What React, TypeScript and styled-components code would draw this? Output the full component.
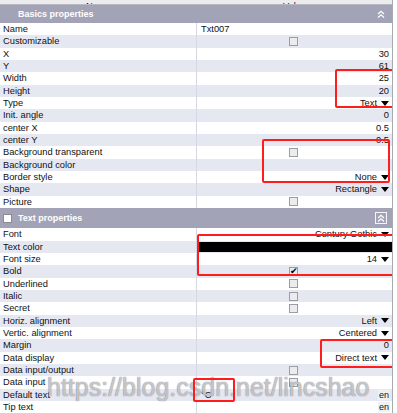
import React from "react";
import styled, { createGlobalStyle } from "styled-components";

const GlobalStyle = createGlobalStyle`
  html, body { margin: 0; padding: 0; background: #fff; }
  body { font-family: "Liberation Sans", Arial, sans-serif; color: #111; }
`;

type Value =
  | { kind: "left"; text: string }
  | { kind: "right"; text: string }
  | { kind: "check"; checked?: boolean }
  | { kind: "drop"; text: string }
  | { kind: "color"; color: string }
  | { kind: "lang"; text?: string }
  | { kind: "none" };

type Prop = { label: string; value: Value };

const basics: Prop[] = [
  { label: "Name", value: { kind: "left", text: "Txt007" } },
  { label: "Customizable", value: { kind: "check" } },
  { label: "X", value: { kind: "right", text: "30" } },
  { label: "Y", value: { kind: "right", text: "61" } },
  { label: "Width", value: { kind: "right", text: "25" } },
  { label: "Height", value: { kind: "right", text: "20" } },
  { label: "Type", value: { kind: "drop", text: "Text" } },
  { label: "Init. angle", value: { kind: "right", text: "0" } },
  { label: "center X", value: { kind: "right", text: "0.5" } },
  { label: "center Y", value: { kind: "right", text: "0.5" } },
  { label: "Background transparent", value: { kind: "check" } },
  { label: "Background color", value: { kind: "none" } },
  { label: "Border style", value: { kind: "drop", text: "None" } },
  { label: "Shape", value: { kind: "drop", text: "Rectangle" } },
  { label: "Picture", value: { kind: "check" } },
];

const textProps: Prop[] = [
  { label: "Font", value: { kind: "drop", text: "Century Gothic" } },
  { label: "Text color", value: { kind: "color", color: "#000" } },
  { label: "Font size", value: { kind: "drop", text: "14" } },
  { label: "Bold", value: { kind: "check", checked: true } },
  { label: "Underlined", value: { kind: "check" } },
  { label: "Italic", value: { kind: "check" } },
  { label: "Secret", value: { kind: "check" } },
  { label: "Horiz. alignment", value: { kind: "drop", text: "Left" } },
  { label: "Vertic. alignment", value: { kind: "drop", text: "Centered" } },
  { label: "Margin", value: { kind: "right", text: "0" } },
  { label: "Data display", value: { kind: "drop", text: "Direct text" } },
  { label: "Data input/output", value: { kind: "check" } },
  { label: "Data input", value: { kind: "check" } },
  { label: "Default text", value: { kind: "lang", text: "°C" } },
  { label: "Tip text", value: { kind: "lang" } },
];

// red annotation boxes drawn over the grid
const marks = [
  { x: 335, y: 69, w: 59, h: 39 },
  { x: 262, y: 139, w: 128, h: 44 },
  { x: 197, y: 234, w: 199, h: 42 },
  { x: 320, y: 339, w: 74, h: 29 },
  { x: 193, y: 378, w: 42, h: 24 },
];

const Panel = styled.div`
  position: relative;
  width: 392px;
  height: 413px;
  border-right: 1px solid #a9a9b2;
  overflow: hidden;
`;

const ColumnHeader = styled.div`
  display: grid;
  grid-template-columns: 197px 1fr;
  align-items: end;
  height: 4px;
  overflow: hidden;
  background: #ececee;
  border-bottom: 1px solid #b8b8c0;
`;

const HeaderCell = styled.div`
  text-align: center;
  font-size: 9.3px;
  line-height: 12px;
  color: #222;
`;

const SectionBar = styled.div<{ $tall?: boolean }>`
  display: flex;
  align-items: center;
  height: ${(p) => (p.$tall ? "20px" : "18px")};
  background: #a3a3b7;
  color: #fff;
  font-weight: bold;
  font-size: 9px;
  padding-left: 3px;
`;

const SectionTitle = styled.span`
  flex: 1;
  padding-left: 15px;
`;

const HeaderBox = styled.span`
  width: 9px;
  height: 9px;
  margin-right: -9px;
  background: #fff;
  border: 1px solid #8a8a96;
  box-sizing: border-box;
`;

const Collapse = styled.span<{ $boxed?: boolean }>`
  display: flex;
  align-items: center;
  justify-content: center;
  width: 12px;
  height: 12px;
  margin-right: 5px;
  box-sizing: border-box;
  border: 1px solid ${(p) => (p.$boxed ? "rgba(255,255,255,0.9)" : "transparent")};
`;

const Row = styled.div<{ $alt: boolean }>`
  display: grid;
  grid-template-columns: 197px 1fr;
  height: 12.35px;
  background: ${(p) => (p.$alt ? "#e6e8f1" : "#fff")};
  font-size: 9.3px;
  line-height: 12.35px;
`;

const Label = styled.div`
  padding-left: 3px;
  border-right: 1px solid #d6d7e2;
  white-space: nowrap;
  overflow: hidden;
`;

const Cell = styled.div<{ $align?: "left" | "right" | "center" }>`
  display: flex;
  align-items: center;
  justify-content: ${(p) =>
    p.$align === "right" ? "flex-end" : p.$align === "center" ? "center" : "space-between"};
  padding: 0 3px 0 4px;
  white-space: nowrap;
  overflow: hidden;
`;

const Box = styled.span`
  position: relative;
  width: 9px;
  height: 9px;
  box-sizing: border-box;
  border: 1px solid #9c9ca4;
  background: #ececee;
  margin-left: -4px;
`;

const Tick = styled.span`
  position: absolute;
  left: 0px;
  top: -3px;
  font-size: 9px;
  line-height: 12px;
  color: #000;
`;

const Drop = styled.span`
  display: flex;
  align-items: center;
  gap: 4px;
`;

const Swatch = styled.div<{ $color: string }>`
  height: 10px;
  margin: 1px 0 0 2px;
  background: ${(p) => p.$color};
`;

const Lang = styled.span`
  font-size: 9px;
  line-height: 10px;
  padding: 0 1px;
  background: #f1f1f3;
  margin-right: -1px;
`;

const Mark = styled.div<{ $x: number; $y: number; $w: number; $h: number }>`
  position: absolute;
  left: ${(p) => p.$x}px;
  top: ${(p) => p.$y}px;
  width: ${(p) => p.$w}px;
  height: ${(p) => p.$h}px;
  box-sizing: border-box;
  border: 2px solid #ff1c1c;
  border-radius: 2px;
  pointer-events: none;
`;

const Watermark = styled.div`
  position: absolute;
  left: 47px;
  top: 373px;
  font-size: 25px;
  line-height: 28px;
  color: rgba(255, 255, 255, 0.6);
  text-shadow: 0 0 1px rgba(80, 80, 92, 0.75), 0 0 1px rgba(80, 80, 92, 0.4);
  white-space: nowrap;
  pointer-events: none;
`;

const BottomLine = styled.div`
  border-top: 1px solid #b8b8c0;
`;

const Arrow = () => (
  <svg width="8" height="5" viewBox="0 0 8 5">
    <polygon points="0,0 8,0 4,5" fill="#000" />
  </svg>
);

const Chevrons = () => (
  <svg width="8" height="8" viewBox="0 0 8 8">
    <polyline points="1,4 4,1.2 7,4" fill="none" stroke="#fff" strokeWidth="1.2" />
    <polyline points="1,7.5 4,4.7 7,7.5" fill="none" stroke="#fff" strokeWidth="1.2" />
  </svg>
);

const ValueCell = ({ value }: { value: Value }) => {
  switch (value.kind) {
    case "left":
      return <Cell>{value.text}</Cell>;
    case "right":
      return <Cell $align="right">{value.text}</Cell>;
    case "check":
      return (
        <Cell $align="center">
          <Box>{value.checked && <Tick>✔</Tick>}</Box>
        </Cell>
      );
    case "drop":
      return (
        <Cell $align="right">
          <Drop>
            {value.text}
            <Arrow />
          </Drop>
        </Cell>
      );
    case "color":
      return <Swatch $color={value.color} />;
    case "lang":
      return (
        <Cell>
          <span>{value.text ?? ""}</span>
          <Lang>en</Lang>
        </Cell>
      );
    default:
      return <Cell />;
  }
};

const Rows = ({ items }: { items: Prop[] }) => (
  <>
    {items.map((p, i) => (
      <Row key={p.label} $alt={i % 2 === 1}>
        <Label>{p.label}</Label>
        <ValueCell value={p.value} />
      </Row>
    ))}
  </>
);

export default function App() {
  return (
    <>
      <GlobalStyle />
      <Panel>
        <ColumnHeader>
          <HeaderCell>Name</HeaderCell>
          <HeaderCell>Value</HeaderCell>
        </ColumnHeader>

        <SectionBar>
          <SectionTitle>Basics properties</SectionTitle>
          <Collapse>
            <Chevrons />
          </Collapse>
        </SectionBar>
        <Rows items={basics} />

        <SectionBar $tall>
          <HeaderBox />
          <SectionTitle>Text properties</SectionTitle>
          <Collapse $boxed>
            <Chevrons />
          </Collapse>
        </SectionBar>
        <Rows items={textProps} />
        <BottomLine />

        <Watermark>https://blog.csdn.net/lincshao</Watermark>
        {marks.map((m, i) => (
          <Mark key={i} $x={m.x} $y={m.y} $w={m.w} $h={m.h} />
        ))}
      </Panel>
    </>
  );
}
